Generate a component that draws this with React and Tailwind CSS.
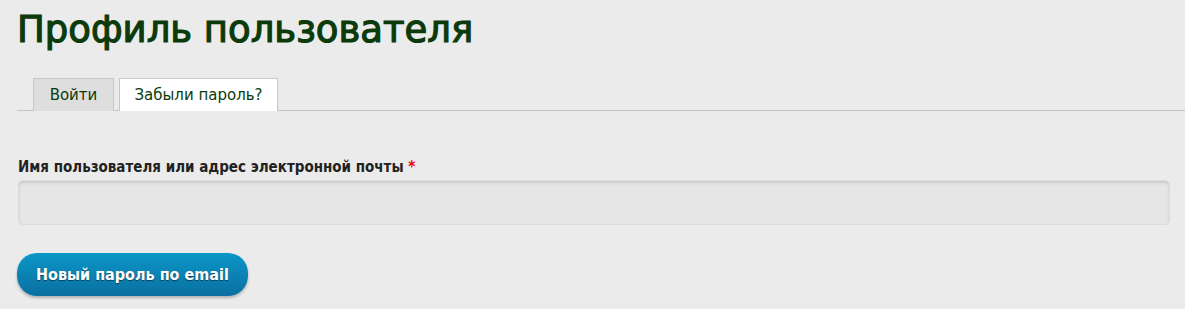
export default function App() {
  return (
    <div className="min-h-[309px] w-full bg-[#ebebeb] pt-[8px]" style={{ fontFamily: '"DejaVu Sans", Verdana, sans-serif' }}>
      <h1 className="ml-[17px] text-[37px] leading-[44px] text-[#0b3a0b] [-webkit-text-stroke:1.2px_#0b3a0b]">Профиль пользователя</h1>
      <div className="ml-[17px] mt-[26px] flex items-end gap-[5px] border-b border-[#c4c4c4] pl-[16px]">
        <div className="-mb-px flex h-[33px] w-[81px] items-center justify-center border border-b-0 border-[#c8c8c8] bg-[#dedede] text-[15px] text-[#0b3a0b]">Войти</div>
        <div className="-mb-px flex h-[33px] w-[159px] items-center justify-center border border-b-0 border-[#c8c8c8] bg-white text-[15px] text-[#0b3a0b]">Забыли пароль?</div>
      </div>
      <div className="mt-[47px] pl-[18px] pr-[15px]" style={{ fontFamily: '"DejaVu Sans Condensed", "DejaVu Sans", sans-serif' }}>
        <div className="text-[15px] font-bold leading-[18px] text-[#222]">
          Имя пользователя или адрес электронной почты <span className="text-[#e00]">*</span>
        </div>
        <div className="mt-[4px] h-[45px] rounded-[5px] border border-[#dcdcdc] bg-[#e6e6e6] shadow-[inset_0_2px_3px_rgba(0,0,0,0.12)]"></div>
      </div>
      <div className="ml-[17px] mt-[28px]">
        <button className="h-[43px] rounded-[20px] bg-gradient-to-b from-[#0b96c8] to-[#0a70a0] px-[19px] text-[16px] font-bold text-white shadow-[0_2px_3px_rgba(0,0,0,0.25)] [text-shadow:0_1px_1px_rgba(0,0,0,0.5)]" style={{ fontFamily: '"DejaVu Sans Condensed", "DejaVu Sans", sans-serif' }}>
          Новый пароль по email
        </button>
      </div>
    </div>
  );
}
